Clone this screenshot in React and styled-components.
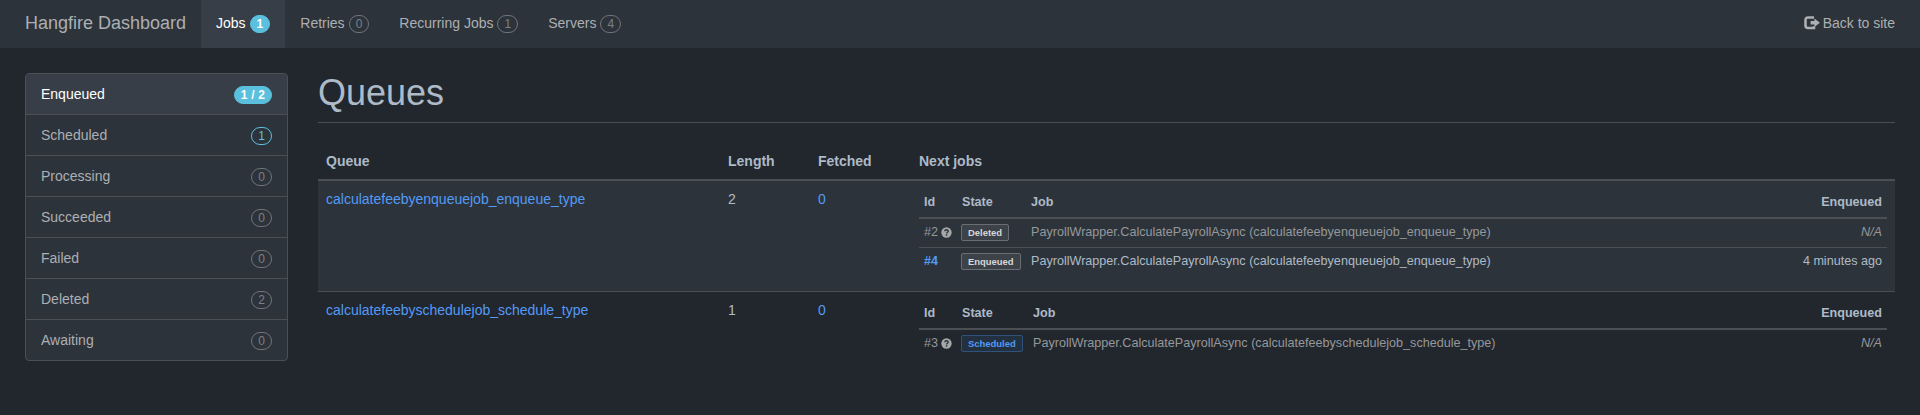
import React from "react";
import styled, { createGlobalStyle, css } from "styled-components";

const Global = createGlobalStyle`
  *, *::before, *::after { box-sizing: border-box; }
  body {
    margin: 0;
    background: #22262d;
    color: #adbac7;
    font: 14px/20px "Liberation Sans", Arial, sans-serif;
  }
  a { text-decoration: none; color: #539bf5; }
`;

const Page = styled.div`
  min-height: 415px;
  background: #22262d;
`;

const Navbar = styled.nav`
  display: flex;
  height: 48px;
  padding: 0 25px;
  background: #2d333a;
`;

const Brand = styled.a`
  display: flex;
  align-items: center;
  width: 176px;
  padding-bottom: 2px;
  font-size: 18px;
  && { color: #acafb3; }
`;

const NavItem = styled.a`
  display: flex;
  align-items: center;
  gap: 4px;
  padding: 0 15px 2px;
  white-space: nowrap;
  && { color: ${(p) => (p.$active ? "#ffffff" : "#acafb3")}; }
  background: ${(p) => (p.$active ? "#383e47" : "transparent")};
`;

const BackLink = styled(NavItem)`
  margin-left: auto;
  gap: 3px;
  padding: 0 0 2px;
`;

const tones = {
  solid: css`
    background: #5bc0de;
    border-color: #5bc0de;
    color: #fff;
    font-weight: 700;
  `,
  info: css`
    border-color: #5bc0de;
    color: #5bc0de;
  `,
  muted: css`
    border-color: #70757b;
    color: #7b8087;
  `,
};

const Badge = styled.span`
  display: inline-block;
  min-width: 10px;
  padding: 2px 6px;
  border: 1px solid;
  border-radius: 10px;
  font-size: 12px;
  line-height: 12px;
  text-align: center;
  white-space: nowrap;
  ${(p) => tones[p.$tone]}
`;

const NavBadge = styled(Badge)`
  margin-top: 2px;
`;

const Body = styled.div`
  display: flex;
  gap: 30px;
  padding: 25px 25px 0;
`;

const Sidebar = styled.aside`
  width: 263px;
  height: 288px;
  border: 1px solid #4b4f54;
  border-radius: 4px;
  overflow: hidden;
  background: #2d333a;
`;

const SideItem = styled.a`
  display: flex;
  align-items: center;
  justify-content: space-between;
  height: 41px;
  padding: 0 15px;
  border-bottom: 1px solid #4b4f54;
  background: ${(p) => (p.$active ? "#383e47" : "transparent")};
  && { color: ${(p) => (p.$active ? "#ffffff" : "#acafb3")}; }
`;

const SideBadge = styled(Badge)`
  margin-top: 2px;
  word-spacing: 0.5px;
`;

const Main = styled.main`
  flex: 1;
  min-width: 0;
`;

const Title = styled.h1`
  height: 50px;
  margin: 0 0 20px;
  border-bottom: 1px solid #4b4f54;
  font-size: 36px;
  line-height: 40px;
  font-weight: 400;
`;

const Table = styled.table`
  width: 100%;
  table-layout: fixed;
  border-spacing: 0;
`;

const Col = styled.col`
  width: ${(p) => (p.$w ? `${p.$w}px` : "auto")};
`;

const Th = styled.th`
  padding: 8px;
  border-bottom: 2px solid #4b4f54;
  text-align: left;
`;

const QueueRow = styled.tr`
  background: ${(p) => (p.$striped ? "#2d333a" : "transparent")};
`;

const Td = styled.td`
  padding: 8px;
  vertical-align: top;
  border-top: ${(p) => (p.$line ? "1px solid #4b4f54" : "0")};
`;

const JobsTable = styled(Table)`
  margin-bottom: 7px;
  font-size: 12.6px;
  line-height: 18px;
`;

const JobTh = styled.th`
  height: 30px;
  padding: 0 5px 3px;
  border-bottom: 2px solid #4b4f54;
  text-align: ${(p) => (p.$right ? "right" : "left")};
`;

const JobTd = styled.td`
  height: ${(p) => (p.$line ? "29px" : "28px")};
  padding: ${(p) => (p.$flush ? "5px 5px 0 4px" : "4px 5px 0")};
  border-top: ${(p) => (p.$line ? "1px solid #4b4f54" : "0")};
  text-align: ${(p) => (p.$right ? "right" : "left")};
  vertical-align: top;
  color: ${(p) => (p.$dim ? "#95989b" : "#adbac7")};
  white-space: nowrap;
`;

const JobLink = styled.a`
  font-weight: 700;
`;

const labelTones = {
  gray: css`
    background: #3d4248;
    border-color: #696e74;
    color: #d6d8da;
  `,
  blue: css`
    background: #22303f;
    border-color: #2f527c;
    color: #539bf5;
  `,
};

const Label = styled.span`
  display: block;
  width: fit-content;
  height: 17px;
  padding: 0 6px;
  border: 1px solid;
  border-radius: 2px;
  font-size: 9.45px;
  line-height: 15px;
  font-weight: 700;
  ${(p) => labelTones[p.$tone]}
`;

const IdCell = styled.span`
  display: flex;
  align-items: center;
  gap: 3px;
`;

const HelpIcon = () => (
  <svg width="11" height="11" viewBox="0 0 11 11">
    <circle cx="5.5" cy="5.5" r="5.2" fill="#a5a7a9" />
    <path d="M3.8 4.3C3.8 2.2 7.2 2.2 7.2 4.2C7.2 5.3 5.7 5.2 5.6 6.5" fill="none" stroke="#2d333a" strokeWidth="1.4" />
    <path d="M4.8 7.3h1.5v1.4H4.8z" fill="#2d333a" />
  </svg>
);

const LogoutIcon = () => (
  <svg width="16" height="14" viewBox="0 0 16 14">
    <path d="M10 1.5H4Q1.5 1.5 1.5 4V9.5Q1.5 12 4 12H10V10.2" fill="none" stroke="#acafb3" strokeWidth="2.6" />
    <path d="M6.6 5h3.8V2.5L15.9 6.8 10.4 11V8.6H6.6z" fill="#acafb3" />
  </svg>
);

const nav = [
  ["Jobs", "1", "solid"],
  ["Retries", "0", "muted"],
  ["Recurring Jobs", "1", "muted"],
  ["Servers", "4", "muted"],
];

const states = [
  ["Enqueued", "1 / 2", "solid"],
  ["Scheduled", "1", "info"],
  ["Processing", "0", "muted"],
  ["Succeeded", "0", "muted"],
  ["Failed", "0", "muted"],
  ["Deleted", "2", "muted"],
  ["Awaiting", "0", "muted"],
];

const queues = [
  {
    name: "calculatefeebyenqueuejob_enqueue_type",
    length: 2,
    fetched: 0,
    stateWidth: 69,
    jobs: [
      { id: "#2", state: "Deleted", tone: "gray", dim: true, time: "N/A" },
      { id: "#4", state: "Enqueued", tone: "gray", time: "4 minutes ago" },
    ],
  },
  {
    name: "calculatefeebyschedulejob_schedule_type",
    length: 1,
    fetched: 0,
    stateWidth: 71,
    jobs: [{ id: "#3", state: "Scheduled", tone: "blue", dim: true, time: "N/A" }],
  },
];

const Jobs = ({ queue }) => (
  <JobsTable>
    <colgroup>
      <Col $w={38} />
      <Col $w={queue.stateWidth} />
      <Col />
      <Col $w={150} />
    </colgroup>
    <thead>
      <tr>
        <JobTh>Id</JobTh>
        <JobTh>State</JobTh>
        <JobTh>Job</JobTh>
        <JobTh $right>Enqueued</JobTh>
      </tr>
    </thead>
    <tbody>
      {queue.jobs.map((job, i) => (
        <tr key={job.id}>
          <JobTd $line={i > 0} $dim={job.dim}>
            {job.dim ? <IdCell>{job.id}<HelpIcon /></IdCell> : <JobLink href="#">{job.id}</JobLink>}
          </JobTd>
          <JobTd $line={i > 0} $flush>
            <Label $tone={job.tone}>{job.state}</Label>
          </JobTd>
          <JobTd $line={i > 0} $dim={job.dim}>
            PayrollWrapper.CalculatePayrollAsync ({queue.name})
          </JobTd>
          <JobTd $line={i > 0} $dim={job.dim} $right>
            {job.dim ? <em>{job.time}</em> : job.time}
          </JobTd>
        </tr>
      ))}
    </tbody>
  </JobsTable>
);

export default function App() {
  return (
    <Page>
      <Global />
      <Navbar>
        <Brand href="#">Hangfire Dashboard</Brand>
        {nav.map(([text, count, tone], i) => (
          <NavItem key={text} href="#" $active={i === 0}>
            {text}
            <NavBadge $tone={tone}>{count}</NavBadge>
          </NavItem>
        ))}
        <BackLink href="#">
          <LogoutIcon />
          Back to site
        </BackLink>
      </Navbar>
      <Body>
        <Sidebar>
          {states.map(([text, count, tone], i) => (
            <SideItem key={text} href="#" $active={i === 0}>
              {text}
              <SideBadge $tone={tone}>{count}</SideBadge>
            </SideItem>
          ))}
        </Sidebar>
        <Main>
          <Title>Queues</Title>
          <Table>
            <colgroup>
              <Col $w={402} />
              <Col $w={90} />
              <Col $w={101} />
              <Col />
            </colgroup>
            <thead>
              <tr>
                <Th>Queue</Th>
                <Th>Length</Th>
                <Th>Fetched</Th>
                <Th>Next jobs</Th>
              </tr>
            </thead>
            <tbody>
              {queues.map((queue, i) => (
                <QueueRow key={queue.name} $striped={i === 0}>
                  <Td $line={i > 0}><a href="#">{queue.name}</a></Td>
                  <Td $line={i > 0}>{queue.length}</Td>
                  <Td $line={i > 0}><a href="#">{queue.fetched}</a></Td>
                  <Td $line={i > 0}><Jobs queue={queue} /></Td>
                </QueueRow>
              ))}
            </tbody>
          </Table>
        </Main>
      </Body>
    </Page>
  );
}
